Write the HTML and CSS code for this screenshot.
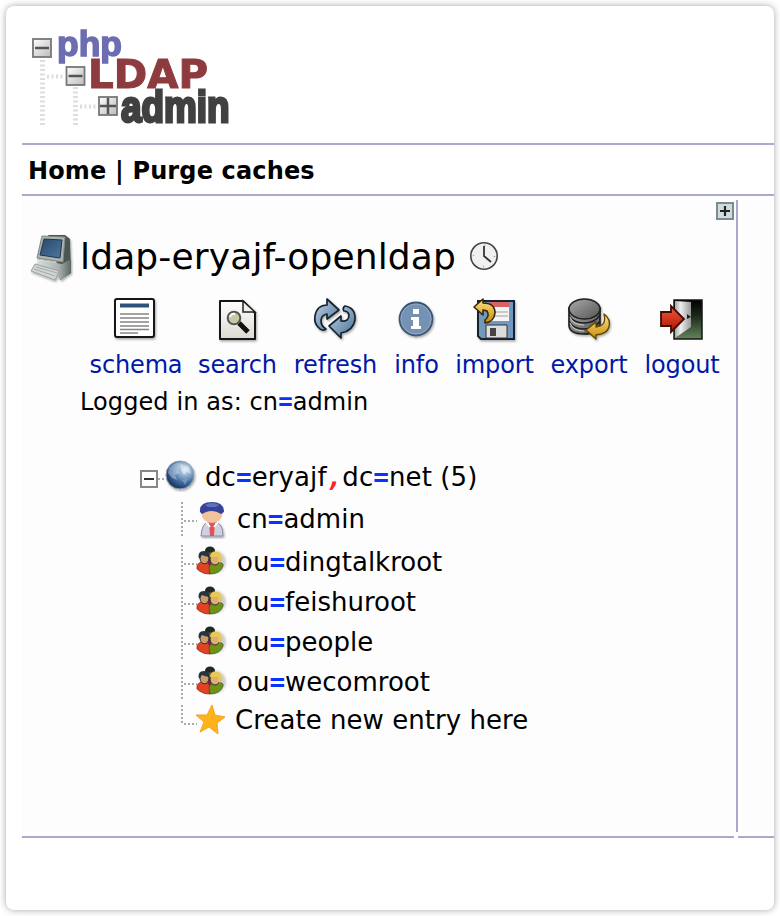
FILE: index.html
```
<!DOCTYPE html>
<html lang="en">
<head>
<meta charset="utf-8">
<title>phpLDAPadmin</title>
<link rel="stylesheet" href="styles.css">
</head>
<body>
<svg class="defs" aria-hidden="true">
  <defs>
    <linearGradient id="box" x1="0" y1="0" x2="1" y2="1"><stop offset="0" stop-color="#fff"/><stop offset="1" stop-color="#bbb"/></linearGradient>
    <linearGradient id="steel" x1="0" y1="0" x2="1" y2="1"><stop offset="0" stop-color="#c2d5e5"/><stop offset="1" stop-color="#456e94"/></linearGradient>
    <linearGradient id="gold" x1="0" y1="0" x2="0" y2="1"><stop offset="0" stop-color="#ffe486"/><stop offset="1" stop-color="#c78a08"/></linearGradient>
    <linearGradient id="red" x1="0" y1="0" x2="0" y2="1"><stop offset="0" stop-color="#f4583c"/><stop offset="1" stop-color="#a81400"/></linearGradient>
    <linearGradient id="room" x1="0" y1="0" x2="0" y2="1"><stop offset="0" stop-color="#000"/><stop offset=".4" stop-color="#1c281a"/><stop offset="1" stop-color="#62845a"/></linearGradient>
    <linearGradient id="door" x1="0" y1="0" x2="1" y2="0"><stop offset="0" stop-color="#a8a8a8"/><stop offset=".35" stop-color="#eee"/><stop offset="1" stop-color="#999"/></linearGradient>
    <linearGradient id="metal" x1="0" y1="0" x2="1" y2="1"><stop offset="0" stop-color="#aaa"/><stop offset="1" stop-color="#555"/></linearGradient>
    <linearGradient id="paper" x1="0" y1="0" x2="0" y2="1"><stop offset="0" stop-color="#fff"/><stop offset="1" stop-color="#ddd9d2"/></linearGradient>
    <linearGradient id="screen" x1="0" y1="0" x2="1" y2="1"><stop offset="0" stop-color="#2b4868"/><stop offset="1" stop-color="#4b78a0"/></linearGradient>
    <linearGradient id="keys" x1="0" y1="0" x2="1" y2="0"><stop offset="0" stop-color="#dfe3e1"/><stop offset=".65" stop-color="#a9b3b0"/><stop offset="1" stop-color="#5d6865"/></linearGradient>
    <radialGradient id="ocean" cx=".68" cy=".3" r=".75"><stop offset="0" stop-color="#d5e3f0"/><stop offset=".35" stop-color="#86a8cb"/><stop offset=".65" stop-color="#3f689c"/><stop offset="1" stop-color="#17315a"/></radialGradient>
    <filter id="soft" x="-20%" y="-20%" width="140%" height="140%"><feGaussianBlur stdDeviation="1"/></filter>
    <filter id="shade" x="-30%" y="-30%" width="160%" height="160%"><feDropShadow dx="1" dy="1.5" stdDeviation="1.3" flood-color="#000" flood-opacity=".35"/></filter>
    <symbol id="group" viewBox="0 0 32 30">
      <ellipse cx="20" cy="16" rx="10" ry="11" fill="#888" opacity=".4" filter="url(#soft)"/>
      <path d="M11 12 L17 8 22 14 18 24 12 22Z" fill="#8b1569"/>
      <ellipse cx="14" cy="4.500" rx="5" ry="4" fill="#202923"/><path d="M11 6 Q14 8 18 5 L17 10 12 10Z" fill="#756044"/>
      <path d="M1 20 Q2 16 8 16 Q14 17 14 22 L14 28 Q6 28 1 23Z" fill="#e14224" stroke="#8d261a" stroke-width=".8"/>
      <path d="M13 21 Q16 15 22 16 Q28 17 27 20 Q24 28 14 28Z" fill="#6e9318" stroke="#385913" stroke-width=".8"/>
      <ellipse cx="8.500" cy="12" rx="4.500" ry="5.800" fill="#c99b6a" stroke="#262a26"/>
      <path d="M3 13 Q1 5 8 5 Q15 5 13 11 Q8 10 6 9Z" fill="#26353d"/>
      <ellipse cx="19" cy="13" rx="5" ry="6" fill="#e0ad76" stroke="#393120"/>
      <path d="M14 11 Q14 6 19 5.500 Q26 5 26 14 L23 17 22 11Z" fill="#e6ca53"/>
    </symbol>
    <symbol id="branch" viewBox="0 0 18 34">
      <path d="M3 0V34M5 19H18" fill="none" stroke="#aaa" stroke-width="2" stroke-dasharray="2 2"/>
    </symbol>
  </defs>
</svg>
<main class="window">
  <header class="banner">
    <svg class="logo" viewBox="0 0 202 100" role="img" aria-label="phpLDAPadmin">
      <path d="M13.500 33V98M46.500 60V98" stroke="#ddd" stroke-width="5" stroke-dasharray="2 2.500"/>
      <path d="M18 49.500H36M51 79.500H68" stroke="#ddd" stroke-width="4" stroke-dasharray="2 2.500"/>
      <g fill="url(#box)" stroke="#777" stroke-width="1.800"><rect x="4" y="12" width="18" height="18"/><rect x="37.500" y="40" width="18" height="18"/><rect x="70" y="70" width="18" height="18"/></g>
      <path d="M6 21H20M39.500 49H53.500M71 79H87M79 71V87" stroke="#555" stroke-width="2.500"/>
      <text class="logo-php" x="28" y="29" textLength="65" lengthAdjust="spacingAndGlyphs">php</text>
      <text class="logo-ldap" x="59" y="60.500" textLength="120" lengthAdjust="spacingAndGlyphs">LDAP</text>
      <text class="logo-admin" transform="translate(92 95) scale(.78 1)" textLength="139" lengthAdjust="spacingAndGlyphs">admin</text>
    </svg>
  </header>
  <nav class="menu">Home | Purge caches</nav>
  <div class="body">
    <section class="tree">
      <svg class="expand" viewBox="0 0 18 18"><rect x="1" y="1" width="16" height="16" fill="#cfdcdf" stroke="#7d8a8e" stroke-width="2"/><path d="M4 9H14M9 4V14" stroke="#222" stroke-width="2.200"/></svg>
      <h1 class="server">
        <svg class="computer" viewBox="0 0 48 54">
          <g filter="url(#shade)">
          <path d="M20 5 L37 5 42 9 43 43 32 50 28 29Z" fill="#4b5552"/>
          <path d="M14 6 L37 7 35 32 9 28Z" fill="#aab4b1" stroke="#7f8987"/>
          <path d="M16 9 L34 10 32 28 12 25Z" fill="url(#screen)" stroke="#23364c"/>
          <path d="M10 30 L34 34 43 29 43 42 33 50 28 44 7 37Z" fill="url(#keys)"/>
          <path d="M7 34 L31 41 27 50 3 41Z" fill="#d1d6d4" stroke="#9ba29f"/>
          <path d="M8 37 L29 43M6 39 L27 46" stroke="#a6afac" stroke-width="1.200"/></g>
        </svg>
        <span class="server-name">ldap-eryajf-openldap</span>
        <svg class="clock" viewBox="0 0 30 30"><circle cx="15" cy="15" r="13.200" fill="#f0f0f0" stroke="#444" stroke-width="1.600"/><circle cx="15" cy="15" r="10.500" fill="none" stroke="#999" stroke-width="1.500" stroke-dasharray="1 15.500"/><path d="M15 5V15L22 21" fill="none" stroke="#333" stroke-width="1.800"/></svg>
      </h1>
      <div class="tools">
        <a class="tool"><svg viewBox="0 0 48 48"><g filter="url(#shade)"><rect x="3" y="3" width="39" height="38" rx="2" fill="#fff" stroke="#161616" stroke-width="2"/></g><path d="M8 9.500H37" stroke="#2d527b" stroke-width="4"/><path d="M8 18H37M8 22H37M8 26H37M8 30H37M8 33.500H37M8 37H26" stroke="#858585" stroke-width="1.700"/></svg>schema</a>
        <a class="tool"><svg viewBox="0 0 48 48"><g filter="url(#shade)"><path d="M6 5H29L41 17V43H6Z" fill="url(#paper)" stroke="#171717" stroke-width="2" stroke-linejoin="round"/><path d="M29 5V16H41Z" fill="#eee" stroke="#222" stroke-width="1.500"/></g><path d="M25 27L34 36" stroke="#111" stroke-width="5"/><circle cx="20" cy="22" r="6.300" fill="#c9c8a4" stroke="#555" stroke-width="2"/><path d="M16 21Q17 17 21 18" fill="none" stroke="#fff" stroke-width="2"/></svg>search</a>
        <a class="tool"><svg viewBox="0 0 48 48"><g filter="url(#shade)" fill="url(#steel)" stroke="#172430" stroke-width="1.700" stroke-linejoin="round"><path d="M15 3L27 14 15 23V18Q9 19 9 25Q9 30 14 33Q10 36 6 31Q2 27 3 20Q5 9 15 9Z"/><path d="M33 10Q44 12 43 24Q41 35 29 37V42L17 30 29 20V25Q37 26 37 19Q36 15 32 15Q30 12 33 10Z"/></g></svg>refresh</a>
        <a class="tool"><svg viewBox="0 0 48 48"><g filter="url(#shade)"><circle cx="23" cy="23" r="16.500" fill="#7592b4" stroke="#3e5670" stroke-width="1.800"/></g><circle cx="23" cy="23" r="15" fill="none" stroke="#91a9c4" stroke-width="1"/><path d="M20 13H26V18H20ZM18 21H26V30H28V33H18V30H20V24H18Z" fill="#fff"/></svg>info</a>
        <a class="tool"><svg viewBox="0 0 48 48"><g filter="url(#shade)"><path d="M7 5H43V43H10L7 40Z" fill="#7199bd" stroke="#172430" stroke-width="2"/></g><path d="M18 6H38V25H18Z" fill="#f4f4f4"/><path d="M18 6H38V11H18Z" fill="#d96262"/><path d="M19 16H37M19 20H37" stroke="#bbb" stroke-width="1.500"/><path d="M15 29H36V42H15Z" fill="#ddd" stroke="#333"/><path d="M19 32H25V40H19Z" fill="#444"/><path d="M3 11L12 3V7Q24 7 24 17Q23 26 14 27V24Q19 20 16 15L12 14V19Z" fill="url(#gold)" stroke="#382700" stroke-width="1.600" stroke-linejoin="round"/></svg>import</a>
        <a class="tool"><svg viewBox="0 0 48 48"><g filter="url(#shade)"><path d="M4 12V30Q5 38 19 38Q33 38 35 30V12Z" fill="url(#metal)" stroke="#181818" stroke-width="1.600"/><path d="M4 19Q8 27 19 27T35 19M4 25Q8 33 19 33T35 25" fill="none" stroke="#222" stroke-width="1.500"/><path d="M5 21Q8 29 19 29M5 27Q8 35 19 35" fill="none" stroke="#ccc"/><ellipse cx="19.500" cy="13" rx="15.500" ry="10" fill="url(#metal)" stroke="#222" stroke-width="1.600"/><path d="M39 18Q46 23 44 31Q42 38 31 39V43L21 34 31 26V31Q42 30 39 18Z" fill="url(#gold)" stroke="#5d4200" stroke-width="1.300" stroke-linejoin="round"/></g></svg>export</a>
        <a class="tool"><svg viewBox="0 0 48 48"><path d="M16 4H44V43H16Z" fill="url(#room)" stroke="#151515" stroke-width="1.500"/><path d="M17 5L33 6V31L17 42Z" fill="url(#door)"/><path d="M29 18L33 21 29 23Z" fill="#222"/><path d="M3 16H13V10L26 23 13 36V30H3Z" fill="url(#red)" stroke="#420b04" stroke-width="1.800"/></svg>logout</a>
      </div>
      <p class="login">Logged in as: cn<b>=</b>admin</p>
      <ul class="entries">
        <li class="root"><svg class="toggle" viewBox="0 0 26 20"><rect x="2" y="2" width="16" height="16" fill="#fff" stroke="#888" stroke-width="2"/><path d="M5 10H15" stroke="#333" stroke-width="2"/><path d="M19 10H26" stroke="#aaa" stroke-width="2" stroke-dasharray="2 2"/></svg><svg class="globe" viewBox="0 0 32 32"><g filter="url(#shade)"><circle cx="15" cy="15" r="14" fill="url(#ocean)" stroke="#909caa"/></g><path d="M4 8Q9 2 16 3L17 7 13 10 15 13 10 15 12 20 7 18 3 13Z" fill="#dce8f2" opacity=".4"/><path d="M16 4L24 7 26 14 22 12 19 15 16 10Z" fill="#fff" opacity=".4"/><path d="M17 20L23 19 20 25Z" fill="#a9c1dc" opacity=".4"/></svg><span class="label">dc<b>=</b>eryajf<i>,</i>dc<b>=</b>net (5)</span></li>
        <li class="entry admin"><svg class="branch"><use href="#branch"/></svg><svg class="person" viewBox="0 0 32 40"><g filter="url(#shade)"><path d="M4 37Q5 23 12 23H18Q26 24 26 37Z" fill="#cfd1df" stroke="#8789a5"/></g><path d="M12 23H18L17 37H13Z" fill="#e05359"/><path d="M9 23L13 28M21 23L17 28" stroke="#fff" stroke-width="2"/><ellipse cx="15" cy="15" rx="10.500" ry="9" fill="#f3c19b"/><path d="M3 13Q2 3 15 3Q27 3 27 13L24 15Q17 10 9 13L5 15Z" fill="#35439b"/><path d="M8 6Q15 2 22 6L19 8H11Z" fill="#5d72b5"/></svg><span class="label">cn<b>=</b>admin</span></li>
        <li class="entry"><svg class="branch"><use href="#branch"/></svg><svg class="group"><use href="#group"/></svg><span class="label">ou<b>=</b>dingtalkroot</span></li>
        <li class="entry"><svg class="branch"><use href="#branch"/></svg><svg class="group"><use href="#group"/></svg><span class="label">ou<b>=</b>feishuroot</span></li>
        <li class="entry"><svg class="branch"><use href="#branch"/></svg><svg class="group"><use href="#group"/></svg><span class="label">ou<b>=</b>people</span></li>
        <li class="entry"><svg class="branch"><use href="#branch"/></svg><svg class="group"><use href="#group"/></svg><span class="label">ou<b>=</b>wecomroot</span></li>
        <li class="entry create"><svg class="branch" viewBox="0 0 18 34"><path d="M3 0V20M5 19H18" fill="none" stroke="#aaa" stroke-width="2" stroke-dasharray="2 2"/></svg><svg class="star" viewBox="0 0 32 32"><path d="M16 1L19 11 29 13 21 19 22 30 13 23 4 28 8 18 0 11 11 11Z" fill="#ffb21c" stroke="#f3a51c"/></svg><span class="label">Create new entry here</span></li>
      </ul>
    </section>
    <section class="content"></section>
  </div>
  <footer class="foot"><span></span><span></span></footer>
</main>
</body>
</html>
```
FILE: styles.css
```
* { box-sizing: border-box; }
body { margin: 0; padding: 6px; background: #fff; color: #000; font-family: Verdana, "DejaVu Sans", sans-serif; }
svg { display: block; flex: none; }
.defs { position: absolute; width: 0; height: 0; }
.window { width: 768px; height: 904px; padding-left: 16px; border-radius: 8px; background: #fff; box-shadow: 0 0 7px rgba(0,0,0,.36); overflow: hidden; }
.banner { height: 137px; padding: 21px 0 0 7px; }
.logo { width: 202px; height: 100px; filter: blur(.6px); }
.logo text { font-family: "Liberation Sans", sans-serif; font-weight: 700; }
.logo .logo-php { font-size: 35px; fill: #6d6db2; stroke: #6d6db2; stroke-width: 1.5px; }
.logo .logo-ldap { font-family: "DejaVu Sans", sans-serif; font-size: 39px; fill: #8e3b3f; stroke: #8e3b3f; stroke-width: 1px; }
.logo .logo-admin { font-size: 44px; fill: #414141; stroke: #414141; stroke-width: 3px; }
.menu { height: 53px; padding-left: 6px; border: solid #aac; border-width: 2px 0; font-size: 24px; font-weight: 700; line-height: 52px; letter-spacing: .15px; }
.body { display: grid; grid-template-columns: 716px 36px; height: 640px; padding: 4px 0 4px; }
.tree { display: flow-root; background: #fdfdfd; border-right: 2px solid #aac; }
.content { margin-left: 4px; background: #fdfdfd; }
.expand { width: 18px; height: 18px; margin: 2px 2px 0 auto; }
.server { display: flex; align-items: center; height: 54px; margin: 10px 0 0 6px; font-size: 36px; font-weight: 400; }
.computer { width: 48px; height: 54px; }
.server-name { margin: -2px 0 0 4px; letter-spacing: .15px; }
.clock { width: 30px; height: 30px; margin: -2px 0 0 13px; }
.tools { display: grid; grid-template-columns: 108px 95px 101px 61px 95px 94px 92px; margin: 12px 0 0 60px; color: #0018a8; font-size: 24px; }
.tool { display: flex; flex-direction: column; align-items: center; line-height: 30px; letter-spacing: -.15px; }
.tool svg { width: 48px; height: 48px; margin-bottom: 6px; }
.login { margin: 6px 0 0 58px; font-size: 24px; line-height: 32px; letter-spacing: .1px; }
b, i { font: 700 1em/1 "DejaVu Sans Mono", monospace; letter-spacing: 0; }
b { color: #0a32ff; }
i { color: #f22; font-style: oblique; }
.entries { list-style: none; margin: 39px 0 0 117px; padding: 0; font-size: 26px; }
.root { display: flex; align-items: center; height: 40px; letter-spacing: .1px; }
.toggle { width: 26px; height: 20px; margin-top: 3px; }
.globe { width: 32px; height: 32px; margin-top: -2px; }
.root .label { margin-left: 8px; }
.entry { display: flex; align-items: center; height: 40px; padding-left: 40px; }
.branch { width: 18px; height: 34px; }
.group { width: 32px; height: 30px; margin: -2px 1px 0 -1px; }
.person { width: 32px; height: 40px; }
.entry .label { margin-left: 8px; }
.admin { height: 43px; margin-bottom: 2px; }
.create { height: 38px; }
.create .branch { margin-top: 1px; }
.star { width: 32px; height: 32px; margin: -2px 1px 0 -1px; }
.create .label { margin: -2px 0 0 6px; letter-spacing: .05px; }
.foot { display: flex; gap: 4px; }
.foot span { width: 712px; height: 2px; background: #aac; }
.foot span + span { width: 36px; }
```
